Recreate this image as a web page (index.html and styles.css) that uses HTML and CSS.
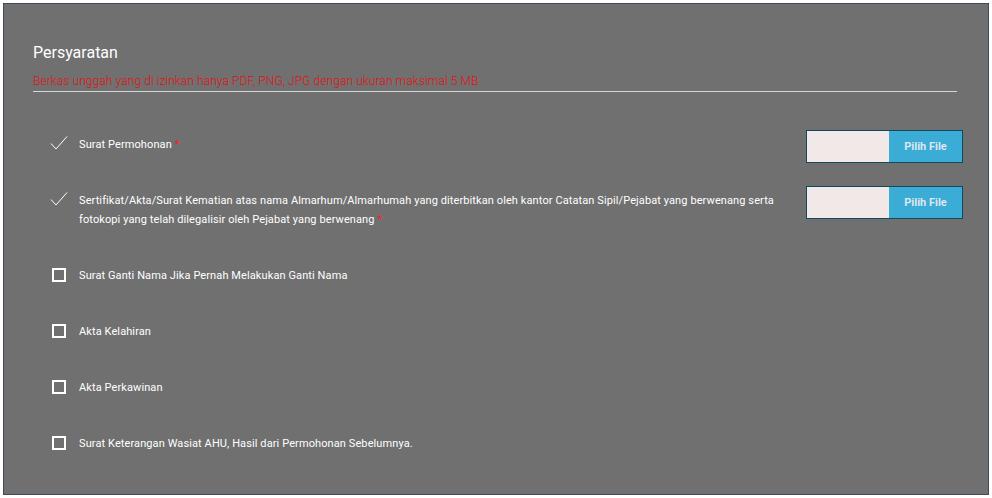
FILE: index.html
```
<!DOCTYPE html>
<html lang="id">
<head>
<meta charset="utf-8">
<title>Persyaratan</title>
<link rel="stylesheet" href="styles.css">
</head>
<body>
<section class="panel">
  <header class="panel-head">
    <h2 class="title">Persyaratan</h2>
    <p class="note">Berkas unggah yang di izinkan hanya PDF, PNG, JPG dengan ukuran maksimal 5 MB</p>
  </header>
  <ul class="reqs">
    <li class="req req-upload">
      <span class="icon"><svg width="18" height="16" viewBox="0 0 18 16"><path d="M1 8.5 L6 14 L17 1.5" fill="none" stroke="#fff" stroke-width="1"/></svg></span>
      <span class="label">Surat Permohonan <span class="star">*</span></span>
      <span class="upload"><span class="upload-field"></span><span class="upload-btn">Pilih File</span></span>
    </li>
    <li class="req req-upload req-tall">
      <span class="icon"><svg width="18" height="16" viewBox="0 0 18 16"><path d="M1 8.5 L6 14 L17 1.5" fill="none" stroke="#fff" stroke-width="1"/></svg></span>
      <span class="label">Sertifikat/Akta/Surat Kematian atas nama Almarhum/Almarhumah yang diterbitkan oleh kantor Catatan Sipil/Pejabat yang berwenang serta fotokopi yang telah dilegalisir oleh Pejabat yang berwenang <span class="star">*</span></span>
      <span class="upload"><span class="upload-field"></span><span class="upload-btn">Pilih File</span></span>
    </li>
    <li class="req req-box">
      <span class="icon"><span class="box"></span></span>
      <span class="label">Surat Ganti Nama Jika Pernah Melakukan Ganti Nama</span>
    </li>
    <li class="req req-box">
      <span class="icon"><span class="box"></span></span>
      <span class="label">Akta Kelahiran</span>
    </li>
    <li class="req req-box">
      <span class="icon"><span class="box"></span></span>
      <span class="label">Akta Perkawinan</span>
    </li>
    <li class="req req-box">
      <span class="icon"><span class="box"></span></span>
      <span class="label">Surat Keterangan Wasiat AHU, Hasil dari Permohonan Sebelumnya.</span>
    </li>
  </ul>
</section>
</body>
</html>
```
FILE: styles.css
```
* { box-sizing: border-box; }
html, body { margin: 0; padding: 0; background: #fff; }
body {
  padding: 3px 3px 3px 3px;
  font-family: Roboto, "Liberation Sans", sans-serif;
  color: #fff;
}
.panel {
  width: 986px;
  height: 492px;
  background: #707070;
  border: 1px solid #3e4a57;
  padding: 39px 31px 20px 29px;
}
.panel-head {
  border-bottom: 1px solid #d6d6d6;
  padding-bottom: 2px;
}
.title {
  margin: 0;
  font-size: 16px;
  line-height: 20px;
  font-weight: 400;
  color: #fff;
}
.note {
  margin: 11px 0 0;
  font-size: 12px;
  line-height: 15px;
  font-weight: 300;
  letter-spacing: 0.08px;
  color: #e01010;
}
.reqs {
  list-style: none;
  margin: 30px -6px 0 0;
  padding: 0 0 0 15px;
}
.req {
  display: flex;
  align-items: flex-start;
  height: 56px;
  padding-top: 8px;
}
.req-tall { height: 72px; }
.icon {
  flex: 0 0 31px;
  display: flex;
  align-items: center;
  height: 19px;
  margin-top: 4px;
}
.icon svg { display: block; margin-left: 2px; margin-top: -2px; }
.label {
  flex: 1;
  font-size: 11px;
  line-height: 19px;
  font-weight: 400;
  letter-spacing: 0.1px;
  margin-top: 4.5px;
  padding-right: 20px;
}
.star { color: #ff1a1a; }
.req-box { align-items: center; padding-top: 0; height: 56px; padding-bottom: 6px; }
.req-box .icon, .req-box .label { margin-top: 0; }
.box {
  display: block;
  width: 14px;
  height: 14px;
  border: 2px solid #fff;
  margin-left: 4px;
}
.upload {
  flex: 0 0 157px;
  display: flex;
  height: 33px;
  border: 1px solid #0f4a5f;
}
.upload-field { flex: 0 0 82px; background: #f2e8e8; }
.upload-btn {
  flex: 1;
  background: #3aacd6;
  color: #dfe7ef;
  font-size: 11px;
  font-weight: 700;
  display: flex;
  align-items: center;
  justify-content: center;
}
```
